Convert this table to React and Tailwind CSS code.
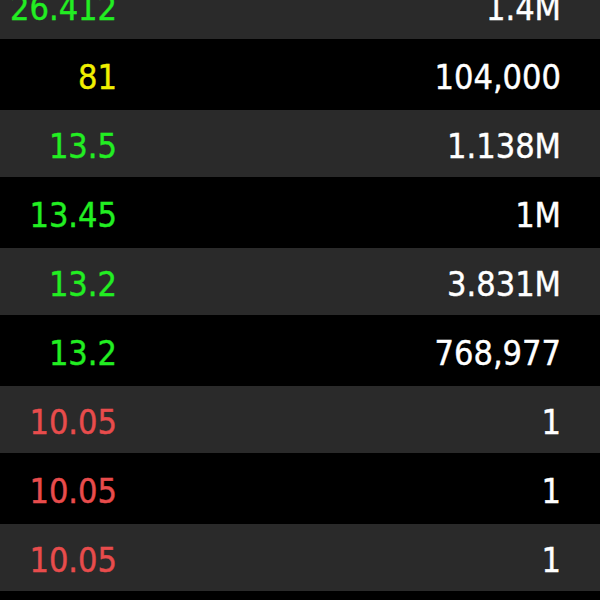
const rows = [
  { price: '26.412', vol: '1.4M', tone: 'up' },
  { price: '81', vol: '104,000', tone: 'flat' },
  { price: '13.5', vol: '1.138M', tone: 'up' },
  { price: '13.45', vol: '1M', tone: 'up' },
  { price: '13.2', vol: '3.831M', tone: 'up' },
  { price: '13.2', vol: '768,977', tone: 'up' },
  { price: '10.05', vol: '1', tone: 'down' },
  { price: '10.05', vol: '1', tone: 'down' },
  { price: '10.05', vol: '1', tone: 'down' },
  { price: '10.05', vol: '1', tone: 'down' },
]

const toneClass = {
  up: 'text-[#22ee22]',
  flat: 'text-[#f0f000]',
  down: 'text-[#e84c4c]',
}

export default function App() {
  return (
    <div className="w-[600px] h-[600px] overflow-hidden bg-black font-['DejaVu_Sans_Condensed','DejaVu_Sans',sans-serif] text-[34px] [-webkit-text-stroke:0.4px]">
      <div className="-mt-[29px]">
        {rows.map((r, i) => (
          <div
            key={i}
            className={`h-[69px] flex items-center border-y border-black ${i % 2 === 0 ? 'bg-[#2a2a2a]' : 'bg-black'}`}
          >
            <div className={`w-[117px] text-right pt-[6px] ${toneClass[r.tone]}`}>{r.price}</div>
            <div className="flex-1 text-right pr-[39px] pt-[6px] text-white">{r.vol}</div>
          </div>
        ))}
      </div>
    </div>
  )
}
